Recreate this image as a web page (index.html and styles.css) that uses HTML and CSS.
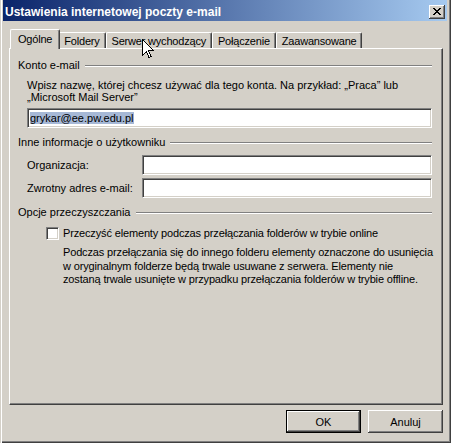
FILE: index.html
```html
<!DOCTYPE html>
<html lang="pl">
<head>
<meta charset="utf-8">
<title>Ustawienia internetowej poczty e-mail</title>
<link rel="stylesheet" href="styles.css">
</head>
<body>
<div class="window">
  <div class="titlebar">
    <span class="title">Ustawienia internetowej poczty e-mail</span>
    <span class="close-btn">
      <svg width="8" height="7" viewBox="0 0 8 7"><path d="M0 0h2v1H0z M6 0h2v1H6z M1 1h2v1H1z M5 1h2v1H5z M2 2h4v1H2z M3 3h2v1H3z M2 4h4v1H2z M1 5h2v1H1z M5 5h2v1H5z M0 6h2v1H0z M6 6h2v1H6z" fill="#000"/></svg>
    </span>
  </div>
  <div class="dialog">
    <div class="tabs">
      <div class="tab active">Ogólne</div>
      <div class="tab">Foldery</div>
      <div class="tab">Serwer wychodzący</div>
      <div class="tab">Połączenie</div>
      <div class="tab">Zaawansowane</div>
    </div>
    <div class="panel">
      <div class="group-title"><span>Konto e-mail</span><span class="rule"></span></div>
      <p class="hint">Wpisz nazwę, której chcesz używać dla tego konta. Na przykład: „Praca” lub<br>„Microsoft Mail Server”</p>
      <div class="field field-wide"><span class="selection">grykar@ee.pw.edu.pl</span></div>

      <div class="group-title gap-top"><span>Inne informacje o użytkowniku</span><span class="rule"></span></div>
      <div class="form-row first"><span class="label">Organizacja:</span><div class="field"></div></div>
      <div class="form-row"><span class="label">Zwrotny adres e-mail:</span><div class="field"></div></div>

      <div class="group-title gap-top"><span>Opcje przeczyszczania</span><span class="rule"></span></div>
      <div class="check-row"><span class="checkbox"></span><span>Przeczyść elementy podczas przełączania folderów w trybie online</span></div>
      <p class="desc">Podczas przełączania się do innego folderu elementy oznaczone do usunięcia<br>w oryginalnym folderze będą trwale usuwane z serwera. Elementy nie<br>zostaną trwale usunięte w przypadku przełączania folderów w trybie offline.</p>
    </div>
    <div class="buttons">
      <div class="btn btn-default">OK</div>
      <div class="btn">Anuluj</div>
    </div>
  </div>
  <svg class="cursor" width="12" height="20" viewBox="0 0 12 20"><path d="M0.5 0.5V16.5L4.5 12.5L7 18.5L9 17.5L6.5 11.5H11.5Z" fill="#fff" stroke="#000" stroke-width="1" shape-rendering="crispEdges"/></svg>
</div>
</body>
</html>
```

FILE: styles.css
```css
* { box-sizing: border-box; }
html, body { margin: 0; padding: 0; background: #D4D0C8; }
body {
  font-family: "Liberation Sans", Arial, sans-serif;
  font-size: 11px;
  color: #000;
}
.window {
  position: relative;
  width: 451px;
  height: 443px;
  display: flex;
  flex-direction: column;
  padding: 0 4px 10px 3px;
  background: #D4D0C8;
  box-shadow: inset 1px 0 0 #D4D0C8, inset 2px 0 0 #fff, inset -1px -1px 0 #404040, inset -2px -2px 0 #808080;
}
.titlebar {
  height: 21px;
  padding: 3px 2px 0 2px;
  display: flex;
  align-items: center;
  justify-content: space-between;
  background: linear-gradient(to right, #0A246A, #A6CAF0);
}
.title {
  color: #fff;
  font-weight: bold;
  font-size: 12px;
  line-height: 14px;
}
.close-btn {
  width: 16px;
  height: 14px;
  display: flex;
  align-items: center;
  justify-content: center;
  padding: 0 1px 1px 0;
  background: #D4D0C8;
  box-shadow: inset -1px -1px 0 #404040, inset 1px 1px 0 #fff, inset -2px -2px 0 #808080;
}
.close-btn svg { display: block; }
.dialog {
  flex: 1;
  display: flex;
  flex-direction: column;
  padding: 8px 4px 0 6px;
}
.tabs {
  height: 19px;
  display: flex;
  align-items: flex-end;
  padding-left: 3px;
  position: relative;
  z-index: 1;
}
.tab {
  height: 16px;
  padding: 2px 5px 0 5px;
  line-height: 13px;
  letter-spacing: -0.2px;
  border-top: 1px solid #fff;
  border-left: 1px solid #fff;
  border-right: 1px solid #404040;
  border-radius: 2px 2px 0 0;
  box-shadow: inset -1px 0 0 #808080;
  background: #D4D0C8;
  white-space: nowrap;
}
.tab.active {
  height: 20px;
  margin: 0 -2px -1px -2px;
  padding: 3px 7px 0 7px;
  position: relative;
  z-index: 2;
}
.panel {
  flex: 1;
  padding: 10px 10px 0 8px;
  border: 1px solid;
  border-color: #fff #404040 #404040 #fff;
  box-shadow: inset -1px -1px 0 #808080;
}
.group-title {
  display: flex;
  align-items: center;
  line-height: 13px;
}
.group-title .rule {
  flex: 1;
  margin-left: 5px;
  border-top: 1px solid #808080;
  border-bottom: 1px solid #fff;
}
.gap-top { margin-top: 8px; }
.hint {
  margin: 7px 0 0 9px;
  line-height: 12px;
  white-space: nowrap;
}
.field {
  height: 20px;
  flex: 1;
  background: #fff;
  border: 1px solid;
  border-color: #808080 #fff #fff #808080;
  box-shadow: inset 1px 1px 0 #404040, inset -1px -1px 0 #D4D0C8;
  padding: 3px 0 0 2px;
  line-height: 13px;
}
.field-wide { margin: 5px 0 0 9px; }
.selection { background: #A6B8D6; }
.form-row {
  display: flex;
  align-items: center;
  margin: 3px 0 0 9px;
}
.form-row.first { margin-top: 6px; }
.form-row .label { width: 115px; }
.check-row {
  display: flex;
  align-items: center;
  margin: 8px 0 0 28px;
  line-height: 13px;
  letter-spacing: -0.15px;
  white-space: nowrap;
}
.checkbox {
  width: 13px;
  height: 13px;
  margin-right: 4px;
  background: #fff;
  border: 1px solid;
  border-color: #808080 #fff #fff #808080;
  box-shadow: inset 1px 1px 0 #404040, inset -1px -1px 0 #D4D0C8;
}
.desc {
  margin: 6px 0 0 45px;
  line-height: 13.5px;
  letter-spacing: -0.15px;
  white-space: nowrap;
}
.buttons {
  display: flex;
  justify-content: flex-end;
  gap: 7px;
  margin-top: 5px;
}
.btn {
  width: 75px;
  height: 23px;
  display: flex;
  align-items: center;
  justify-content: center;
  background: #D4D0C8;
  box-shadow: inset -1px -1px 0 #404040, inset 1px 1px 0 #fff, inset -2px -2px 0 #808080;
}
.btn-default {
  border: 1px solid #000;
}
.cursor {
  position: absolute;
  left: 142px;
  top: 39px;
  z-index: 5;
}
```
